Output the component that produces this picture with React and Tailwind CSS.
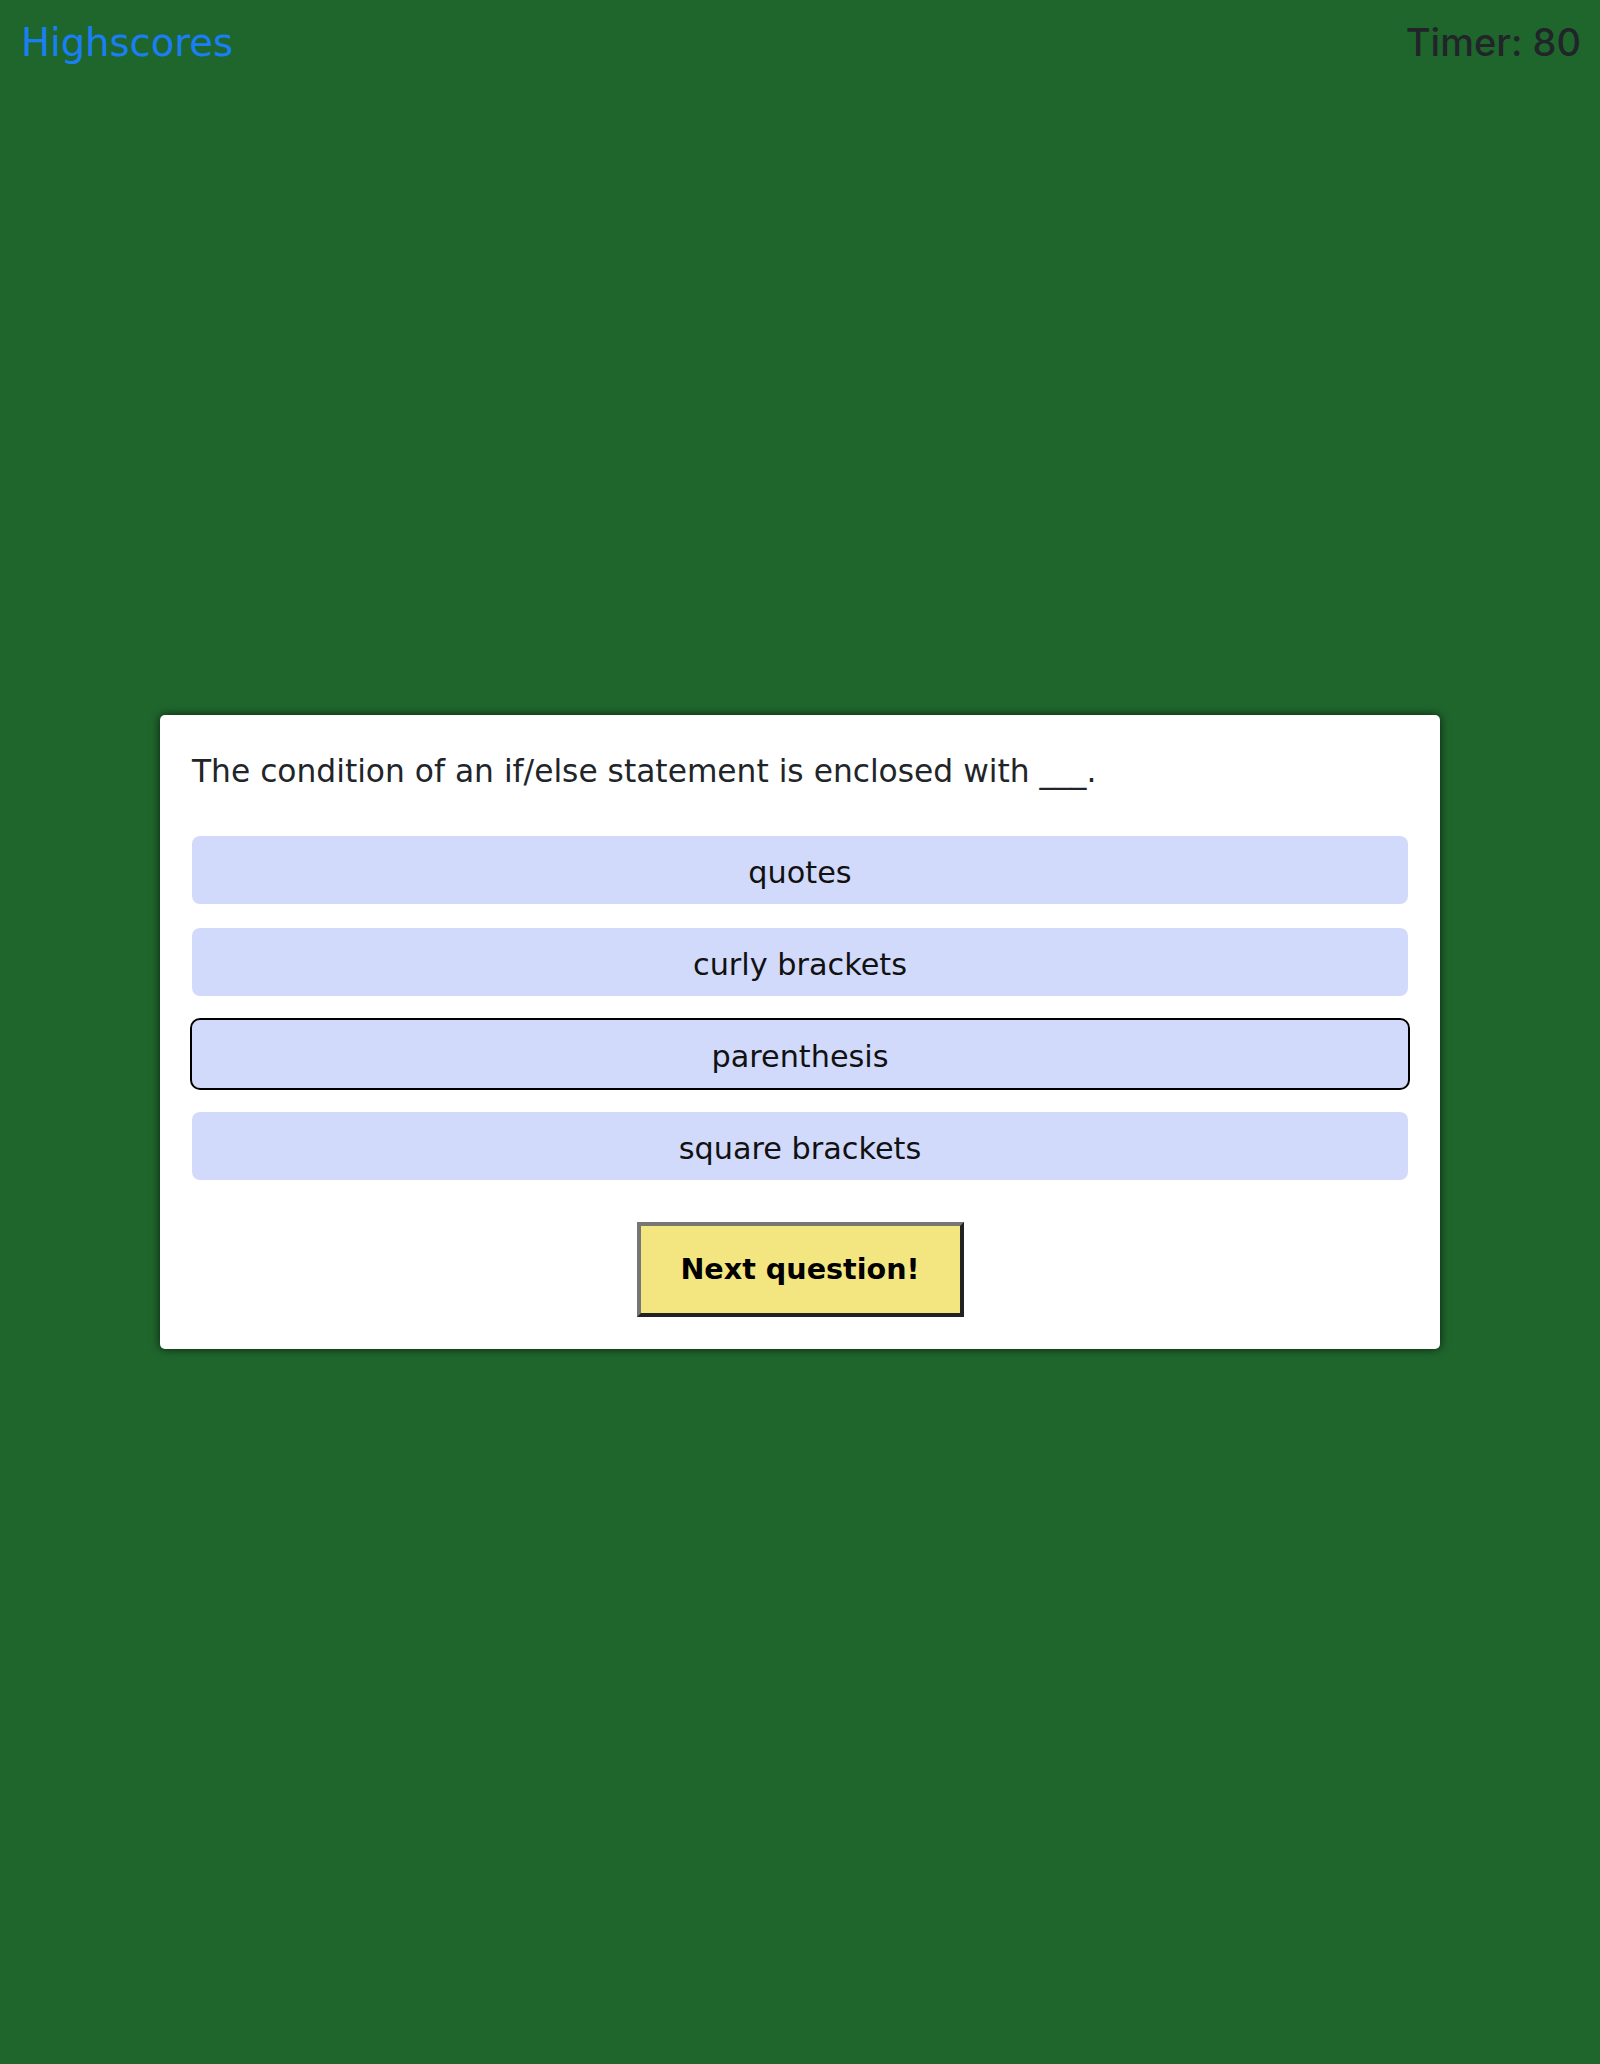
import React from "react";

const options = ["quotes", "curly brackets", "parenthesis", "square brackets"];

export default function App() {
  return (
    <div className="flex h-[2064px] flex-col bg-[#1f662d] font-['DejaVu_Sans',sans-serif]">
      <header className="flex h-[86px] items-baseline justify-between pl-[21px] pr-[19px] pt-[20px]">
        <a href="#" className="text-[38.5px] leading-[1.2] text-[#1a7ff5]">
          Highscores
        </a>
        <span className="font-['Inter',sans-serif] text-[38px] font-medium leading-[1.2] text-[#212529]">
          Timer: 80
        </span>
      </header>
      <main className="flex flex-1 items-center justify-center">
        <div className="flex w-[1280px] flex-col rounded-[5px] bg-white px-[32px] pb-[32px] pt-[33px] shadow-[0_0_10px_rgba(0,0,0,0.7)]">
          <p className="text-[31.3px] leading-[46px] text-[#212529]">
            The condition of an if/else statement is enclosed with ___.
          </p>
          <div className="mt-[42px] flex flex-col gap-[24px]">
            {options.map((o, i) => (
              <button
                key={o}
                className={
                  i === 2
                    ? "flex h-[68px] items-center justify-center rounded-[8px] bg-[#d2dafc] pt-[4px] text-[30.3px] leading-[45px] text-[#111] outline-2 outline-black"
                    : "flex h-[68px] items-center justify-center rounded-[8px] bg-[#d2dafc] pt-[4px] text-[30.3px] leading-[45px] text-[#111]"
                }
              >
                {o}
              </button>
            ))}
          </div>
          <div className="mt-[42px] flex justify-center">
            <button className="flex h-[95px] w-[327px] items-center justify-center border-[4px] border-b-[#222] border-l-[#767676] border-r-[#222] border-t-[#767676] bg-[#f3e680] text-[28.6px] font-bold text-black">
              Next question!
            </button>
          </div>
        </div>
      </main>
      <div className="h-[86px]" />
    </div>
  );
}
